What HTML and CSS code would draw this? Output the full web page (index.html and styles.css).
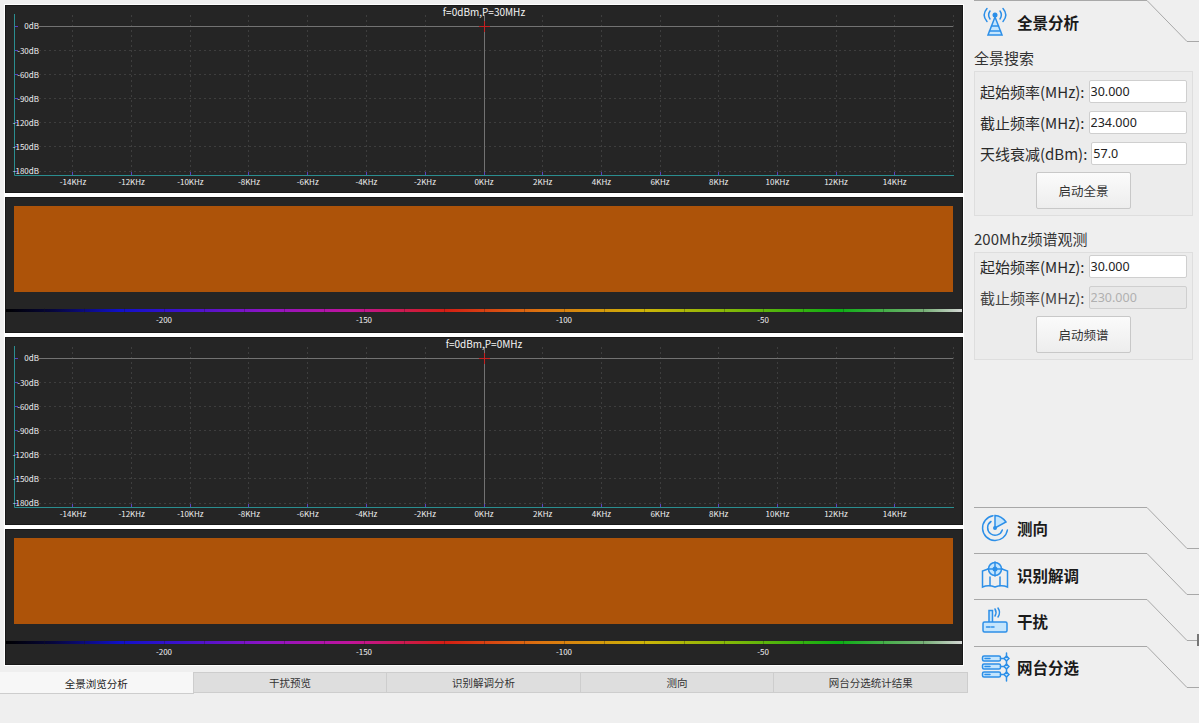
FILE: index.html
```html
<!DOCTYPE html>
<html lang="zh">
<head>
<meta charset="utf-8">
<title>全景分析</title>
<link rel="stylesheet" href="styles.css">
</head>
<body>
<div class="app">
  <main class="left">
    <div class="charts">
      <svg class="plot spectrum" viewBox="0 0 958 188">
        <defs>
          <g id="grid">
            <path class="grid" d="M34 45.500H948M34 69.500H948M34 93.500H948M34 117.500H948M34 141.500H948M34 166.500H948"/>
            <path class="grid" d="M67.500 10V170M126.500 10V170M185.500 10V170M243.500 10V170M302.500 10V170M361.500 10V170M420.500 10V170M537.500 10V170M596.500 10V170M655.500 10V170M713.500 10V170M772.500 10V170M831.500 10V170M889.500 10V170M948.500 10V170"/>
            <path class="zero" d="M34 21.500H948M479.500 10V170"/>
            <path class="mark" d="M474 21.500H485M479.500 16V27"/>
            <path class="tick" d="M9 21.500H13M9 45.500H13M9 69.500H13M9 93.500H13M9 117.500H13M9 141.500H13M9 166.500H13M67.500 167V170M126.500 167V170M185.500 167V170M243.500 167V170M302.500 167V170M361.500 167V170M420.500 167V170M479.500 167V170M537.500 167V170M596.500 167V170M655.500 167V170M713.500 167V170M772.500 167V170M831.500 167V170M889.500 167V170"/>
            <path class="axis" d="M9.500 9V170.500H949"/>
          </g>
          <g id="scale">
            <rect class="bar" x="0" y="112" width="958" height="3"/>
            <path class="scale-tick" d="M39.500 111V116M79.500 111V116M119.500 111V116M159.500 111V116M199.500 111V116M239.500 111V116M279.500 111V116M319.500 111V116M359.500 111V116M399.500 111V116M439.500 111V116M479.500 111V116M519.500 111V116M559.500 111V116M599.500 111V116M639.500 111V116M679.500 111V116M719.500 111V116M758.500 111V116M798.500 111V116M838.500 111V116M878.500 111V116M918.500 111V116"/>
            <rect class="water" x="9" y="9" width="939" height="86"/>
          </g>
          <linearGradient id="spectrum-gradient">
            <stop offset="0" stop-color="#000"/>
            <stop offset="0.05" stop-color="#06063c"/>
            <stop offset="0.12" stop-color="#1010c8"/>
            <stop offset="0.18" stop-color="#3a12cc"/>
            <stop offset="0.27" stop-color="#8c14c4"/>
            <stop offset="0.36" stop-color="#c0149c"/>
            <stop offset="0.46" stop-color="#d41e14"/>
            <stop offset="0.56" stop-color="#dc7410"/>
            <stop offset="0.67" stop-color="#ccb408"/>
            <stop offset="0.76" stop-color="#80b808"/>
            <stop offset="0.87" stop-color="#0cae14"/>
            <stop offset="0.96" stop-color="#78b078"/>
            <stop offset="1" stop-color="#d8d8d8"/>
          </linearGradient>
        </defs>
        <use href="#grid"/>
        <text class="title" x="479" y="11">f=0dBm,P=30MHz</text>
        <text class="ylab" x="34" y="24">0dB</text>
        <text class="ylab" x="34" y="49">-30dB</text>
        <text class="ylab" x="34" y="73">-60dB</text>
        <text class="ylab" x="34" y="97">-90dB</text>
        <text class="ylab" x="34" y="121">-120dB</text>
        <text class="ylab" x="34" y="145">-150dB</text>
        <text class="ylab" x="34" y="169">-180dB</text>
        <text class="xlab" x="68" y="180">-14KHz</text>
        <text class="xlab" x="126.700" y="180">-12KHz</text>
        <text class="xlab" x="185.400" y="180">-10KHz</text>
        <text class="xlab" x="244" y="180">-8KHz</text>
        <text class="xlab" x="302.700" y="180">-6KHz</text>
        <text class="xlab" x="361.400" y="180">-4KHz</text>
        <text class="xlab" x="420" y="180">-2KHz</text>
        <text class="xlab" x="479" y="180">0KHz</text>
        <text class="xlab" x="537.700" y="180">2KHz</text>
        <text class="xlab" x="596.400" y="180">4KHz</text>
        <text class="xlab" x="655" y="180">6KHz</text>
        <text class="xlab" x="713.700" y="180">8KHz</text>
        <text class="xlab" x="772.400" y="180">10KHz</text>
        <text class="xlab" x="831" y="180">12KHz</text>
        <text class="xlab" x="889.700" y="180">14KHz</text>
      </svg>

      <svg class="plot waterfall" viewBox="0 0 958 136">
        <use href="#scale"/>
        <text class="xlab" x="159" y="126">-200</text>
        <text class="xlab" x="359" y="126">-150</text>
        <text class="xlab" x="559" y="126">-100</text>
        <text class="xlab" x="758" y="126">-50</text>
      </svg>

      <svg class="plot spectrum" viewBox="0 0 958 188">
        <use href="#grid"/>
        <text class="title" x="479" y="11">f=0dBm,P=0MHz</text>
        <text class="ylab" x="34" y="24">0dB</text>
        <text class="ylab" x="34" y="49">-30dB</text>
        <text class="ylab" x="34" y="73">-60dB</text>
        <text class="ylab" x="34" y="97">-90dB</text>
        <text class="ylab" x="34" y="121">-120dB</text>
        <text class="ylab" x="34" y="145">-150dB</text>
        <text class="ylab" x="34" y="169">-180dB</text>
        <text class="xlab" x="68" y="180">-14KHz</text>
        <text class="xlab" x="126.700" y="180">-12KHz</text>
        <text class="xlab" x="185.400" y="180">-10KHz</text>
        <text class="xlab" x="244" y="180">-8KHz</text>
        <text class="xlab" x="302.700" y="180">-6KHz</text>
        <text class="xlab" x="361.400" y="180">-4KHz</text>
        <text class="xlab" x="420" y="180">-2KHz</text>
        <text class="xlab" x="479" y="180">0KHz</text>
        <text class="xlab" x="537.700" y="180">2KHz</text>
        <text class="xlab" x="596.400" y="180">4KHz</text>
        <text class="xlab" x="655" y="180">6KHz</text>
        <text class="xlab" x="713.700" y="180">8KHz</text>
        <text class="xlab" x="772.400" y="180">10KHz</text>
        <text class="xlab" x="831" y="180">12KHz</text>
        <text class="xlab" x="889.700" y="180">14KHz</text>
      </svg>

      <svg class="plot waterfall" viewBox="0 0 958 136">
        <use href="#scale"/>
        <text class="xlab" x="159" y="126">-200</text>
        <text class="xlab" x="359" y="126">-150</text>
        <text class="xlab" x="559" y="126">-100</text>
        <text class="xlab" x="758" y="126">-50</text>
      </svg>
    </div>
    <nav class="tabs">
      <div class="tab active">全景浏览分析</div>
      <div class="tab">干扰预览</div>
      <div class="tab">识别解调分析</div>
      <div class="tab">测向</div>
      <div class="tab">网台分选统计结果</div>
    </nav>
  </main>

  <aside class="side">
    <div class="nav-item">
      <svg class="nav-line" viewBox="0 0 225 47"><path d="M0 .5H173L213 41.500H225"/></svg>
      <svg class="icon" viewBox="0 0 30 30">
        <path class="ic" d="M7 1.500C3.500 5.500 3.500 10.500 7 14.500M10 4C8.300 6.500 8.300 9.500 10 12M23 1.500C26.500 5.500 26.500 10.500 23 14.500M20 4C21.700 6.500 21.700 9.500 20 12"/>
        <circle class="ic-fill" cx="15" cy="8" r="2.500"/>
        <path class="ic-soft" d="M15 10L8 28H22Z"/>
        <path class="ic" d="M11.500 19H18.500M9.500 24H20.500"/>
      </svg>
      <span class="nav-text">全景分析</span>
    </div>

    <h2 class="group-title">全景搜索</h2>
    <section class="group">
      <div class="row"><label class="lab">起始频率(MHz):</label><input class="field" value="30.000"></div>
      <div class="row"><label class="lab">截止频率(MHz):</label><input class="field" value="234.000"></div>
      <div class="row"><label class="lab">天线衰减(dBm):</label><input class="field" value="57.0"></div>
      <button class="btn">启动全景</button>
    </section>

    <h2 class="group-title second">200Mhz频谱观测</h2>
    <section class="group tight">
      <div class="row"><label class="lab">起始频率(MHz):</label><input class="field" value="30.000"></div>
      <div class="row"><label class="lab dim">截止频率(MHz):</label><input class="field" value="230.000" disabled></div>
      <button class="btn">启动频谱</button>
    </section>

    <div class="nav-stack">
      <div class="nav-item small">
        <svg class="nav-line" viewBox="0 0 225 47"><path d="M0 .5H173L213 41.500H225"/></svg>
        <svg class="icon" viewBox="0 0 30 30">
          <path class="ic" d="M13 2.700A12.500 12.500 0 1 0 27.400 17"/>
          <path class="ic" d="M11 8.500A7.500 7.500 0 1 0 22.300 17"/>
          <path class="ic-soft" d="M15 15V2.500C19.500 2.800 23.500 5.500 26 9Z"/>
          <circle class="ic-dot" cx="15" cy="15" r="2"/>
        </svg>
        <span class="nav-text">测向</span>
      </div>
      <div class="nav-item small">
        <svg class="nav-line" viewBox="0 0 225 47"><path d="M0 .5H173L213 41.500H225"/></svg>
        <svg class="icon" viewBox="0 0 30 30">
          <path class="ic" d="M8 9L2.500 11V27C7 25 10 25 15 27C20 25 23 25 27.500 27V11L22 9M10 17V25M20 17V25"/>
          <circle class="ic-soft" cx="15" cy="9" r="6.500"/>
          <path class="ic" d="M15 2V16M8 9H22"/>
          <circle class="ic-dot" cx="15" cy="9" r="2.500"/>
        </svg>
        <span class="nav-text">识别解调</span>
      </div>
      <div class="nav-item small">
        <svg class="nav-line" viewBox="0 0 225 47"><path d="M0 .5H173L213 41.500H225"/><path class="stub" d="M224 35V47"/></svg>
        <svg class="icon" viewBox="0 0 30 30">
          <path class="ic-soft" d="M9 16V4.500H12.500V16"/>
          <rect class="ic-soft" x="3" y="16" width="24" height="10" rx="1.500"/>
          <path class="ic" d="M6.500 21H10M11.500 21H14M15 3C16.200 5 16.200 8 15 10M18 2C20 5 20 8 18 11"/>
        </svg>
        <span class="nav-text">干扰</span>
      </div>
      <div class="nav-item small">
        <svg class="nav-line" viewBox="0 0 225 47"><path d="M0 .5H173L213 41.500H225"/></svg>
        <svg class="icon" viewBox="0 0 30 30">
          <rect class="ic-soft" x="2.500" y="4" width="18" height="5" rx="1.500"/>
          <rect class="ic-soft" x="2.500" y="12" width="18" height="5" rx="1.500"/>
          <rect class="ic-soft" x="2.500" y="20" width="18" height="5" rx="1.500"/>
          <path class="ic" d="M26.500 1V29M20.500 6.500H24M20.500 14.500H24M20.500 22.500H24M5 6.500H10M5 14.500H10M5 22.500H10"/>
          <path class="ic-soft" d="M26.500 4L29 6.500L26.500 9L24 6.500ZM26.500 12L29 14.500L26.500 17L24 14.500ZM26.500 20L29 22.500L26.500 25L24 22.500Z"/>
        </svg>
        <span class="nav-text">网台分选</span>
      </div>
    </div>
  </aside>
</div>
</body>
</html>
```

FILE: styles.css
```css
* { box-sizing: border-box; }

html, body {
  margin: 0;
  height: 100%;
  overflow: hidden;
  background: #efefef;
}

body {
  font-family: "Noto Sans CJK SC", "Noto Sans", sans-serif;
  color: #222;
}

.app {
  display: flex;
  width: 1199px;
  height: 723px;
}

/* left column */
.left {
  width: 974px;
  flex: none;
  display: flex;
  flex-direction: column;
  padding-top: 4px;
}

.charts {
  width: 960px;
  margin-left: 4px;
  padding: 1px;
  display: flex;
  flex-direction: column;
  gap: 4px;
  background: #fff;
}

.plot {
  display: block;
  width: 958px;
  background: #252525;
  outline: 1px solid #181818;
  outline-offset: -1px;
}

.spectrum { height: 188px; }
.waterfall { height: 136px; }

.title {
  fill: #f4f4f4;
  font-size: 10px;
  text-anchor: middle;
}

.xlab, .ylab {
  fill: #f0f0f0;
  font-size: 8px;
}

.xlab { text-anchor: middle; }
.ylab { text-anchor: end; }

.grid {
  fill: none;
  stroke: #3e3e3e;
  stroke-width: 1;
  stroke-dasharray: 2 3;
}

.zero {
  fill: none;
  stroke: #727272;
  stroke-width: 1;
}

.mark {
  fill: none;
  stroke: #c42020;
  stroke-width: 1;
}

.tick {
  fill: none;
  stroke: #5a42c0;
  stroke-width: 1;
}

.axis {
  fill: none;
  stroke: #2b8e90;
  stroke-width: 1;
}

.water { fill: #ad5309; }
.bar { fill: url(#spectrum-gradient); }

.scale-tick {
  fill: none;
  stroke: #1a1a1a;
  stroke-width: 1;
  opacity: .3;
}

/* bottom tabs */
.tabs {
  display: flex;
  width: 968px;
  margin-top: 6px;
}

.tab {
  flex: 1 1 0;
  height: 21px;
  line-height: 20px;
  text-align: center;
  font-size: 10.500px;
  background: #dedede;
  border: 1px solid #cdcdcd;
  border-left-width: 0;
  color: #333;
}

.tab.active {
  height: 22px;
  line-height: 23px;
  background: #f7f7f7;
  border-top: 0;
  color: #222;
}

/* right column */
.side {
  width: 225px;
  flex: none;
  display: flex;
  flex-direction: column;
}

.nav-item {
  position: relative;
  height: 47px;
  flex: none;
  display: flex;
  align-items: center;
  gap: 8px;
  padding: 0 0 3px 6px;
}

.nav-item.small { height: 46.330px; padding-bottom: 3px; }

.nav-line {
  position: absolute;
  left: 0;
  top: 0;
  width: 225px;
  height: 47px;
  fill: none;
  stroke: #a8a8a8;
  stroke-width: 1;
}

.nav-line .stub { stroke: #777; stroke-width: 2; }

.icon {
  width: 30px;
  height: 30px;
  flex: none;
}

.ic {
  fill: none;
  stroke: #2c8fe8;
  stroke-width: 1.500;
  stroke-linecap: round;
}

.ic-soft {
  fill: #c4e5fd;
  stroke: #2c8fe8;
  stroke-width: 1.500;
}

.ic-fill, .ic-dot { fill: #2c8fe8; }

.nav-text {
  font-size: 15.500px;
  font-weight: 700;
  line-height: 22px;
  margin-left: -1px;
  color: #1a1a1a;
}

.group-title {
  margin: 0;
  height: 24px;
  font-size: 15px;
  line-height: 22px;
  font-weight: 400;
  color: #333;
}

.group-title.second { margin-top: 12px; }

.group {
  width: 219px;
  padding: 8px 5px 6px 5px;
  display: flex;
  flex-direction: column;
  gap: 8px;
  background: #ececec;
  border: 1px solid #dedede;
}

.group.tight { padding-top: 2px; }

.row {
  display: flex;
  align-items: center;
  height: 23px;
  gap: 4px;
}

.lab {
  flex: none;
  font-size: 15px;
  line-height: 23px;
  color: #2a2a2a;
}

.lab.dim { color: #444; }

.field {
  flex: 1 1 0;
  min-width: 0;
  height: 23px;
  padding: 0 1px;
  font-family: "Noto Sans", sans-serif;
  font-size: 12.500px;
  color: #222;
  background: #fff;
  border: 1px solid #cfcfcf;
  border-radius: 2px;
  outline: 0;
}

.field:disabled {
  color: #b0b0b0;
  background: #e8e8e8;
}

.btn {
  align-self: center;
  width: 95px;
  height: 37px;
  margin-top: -1px;
  font-family: inherit;
  font-size: 12.500px;
  color: #333;
  background: linear-gradient(#fbfbfb, #ededed);
  border: 1px solid #c8c8c8;
  border-radius: 2px;
}

.nav-stack {
  margin-top: auto;
  margin-bottom: 31px;
  display: flex;
  flex-direction: column;
}
```
